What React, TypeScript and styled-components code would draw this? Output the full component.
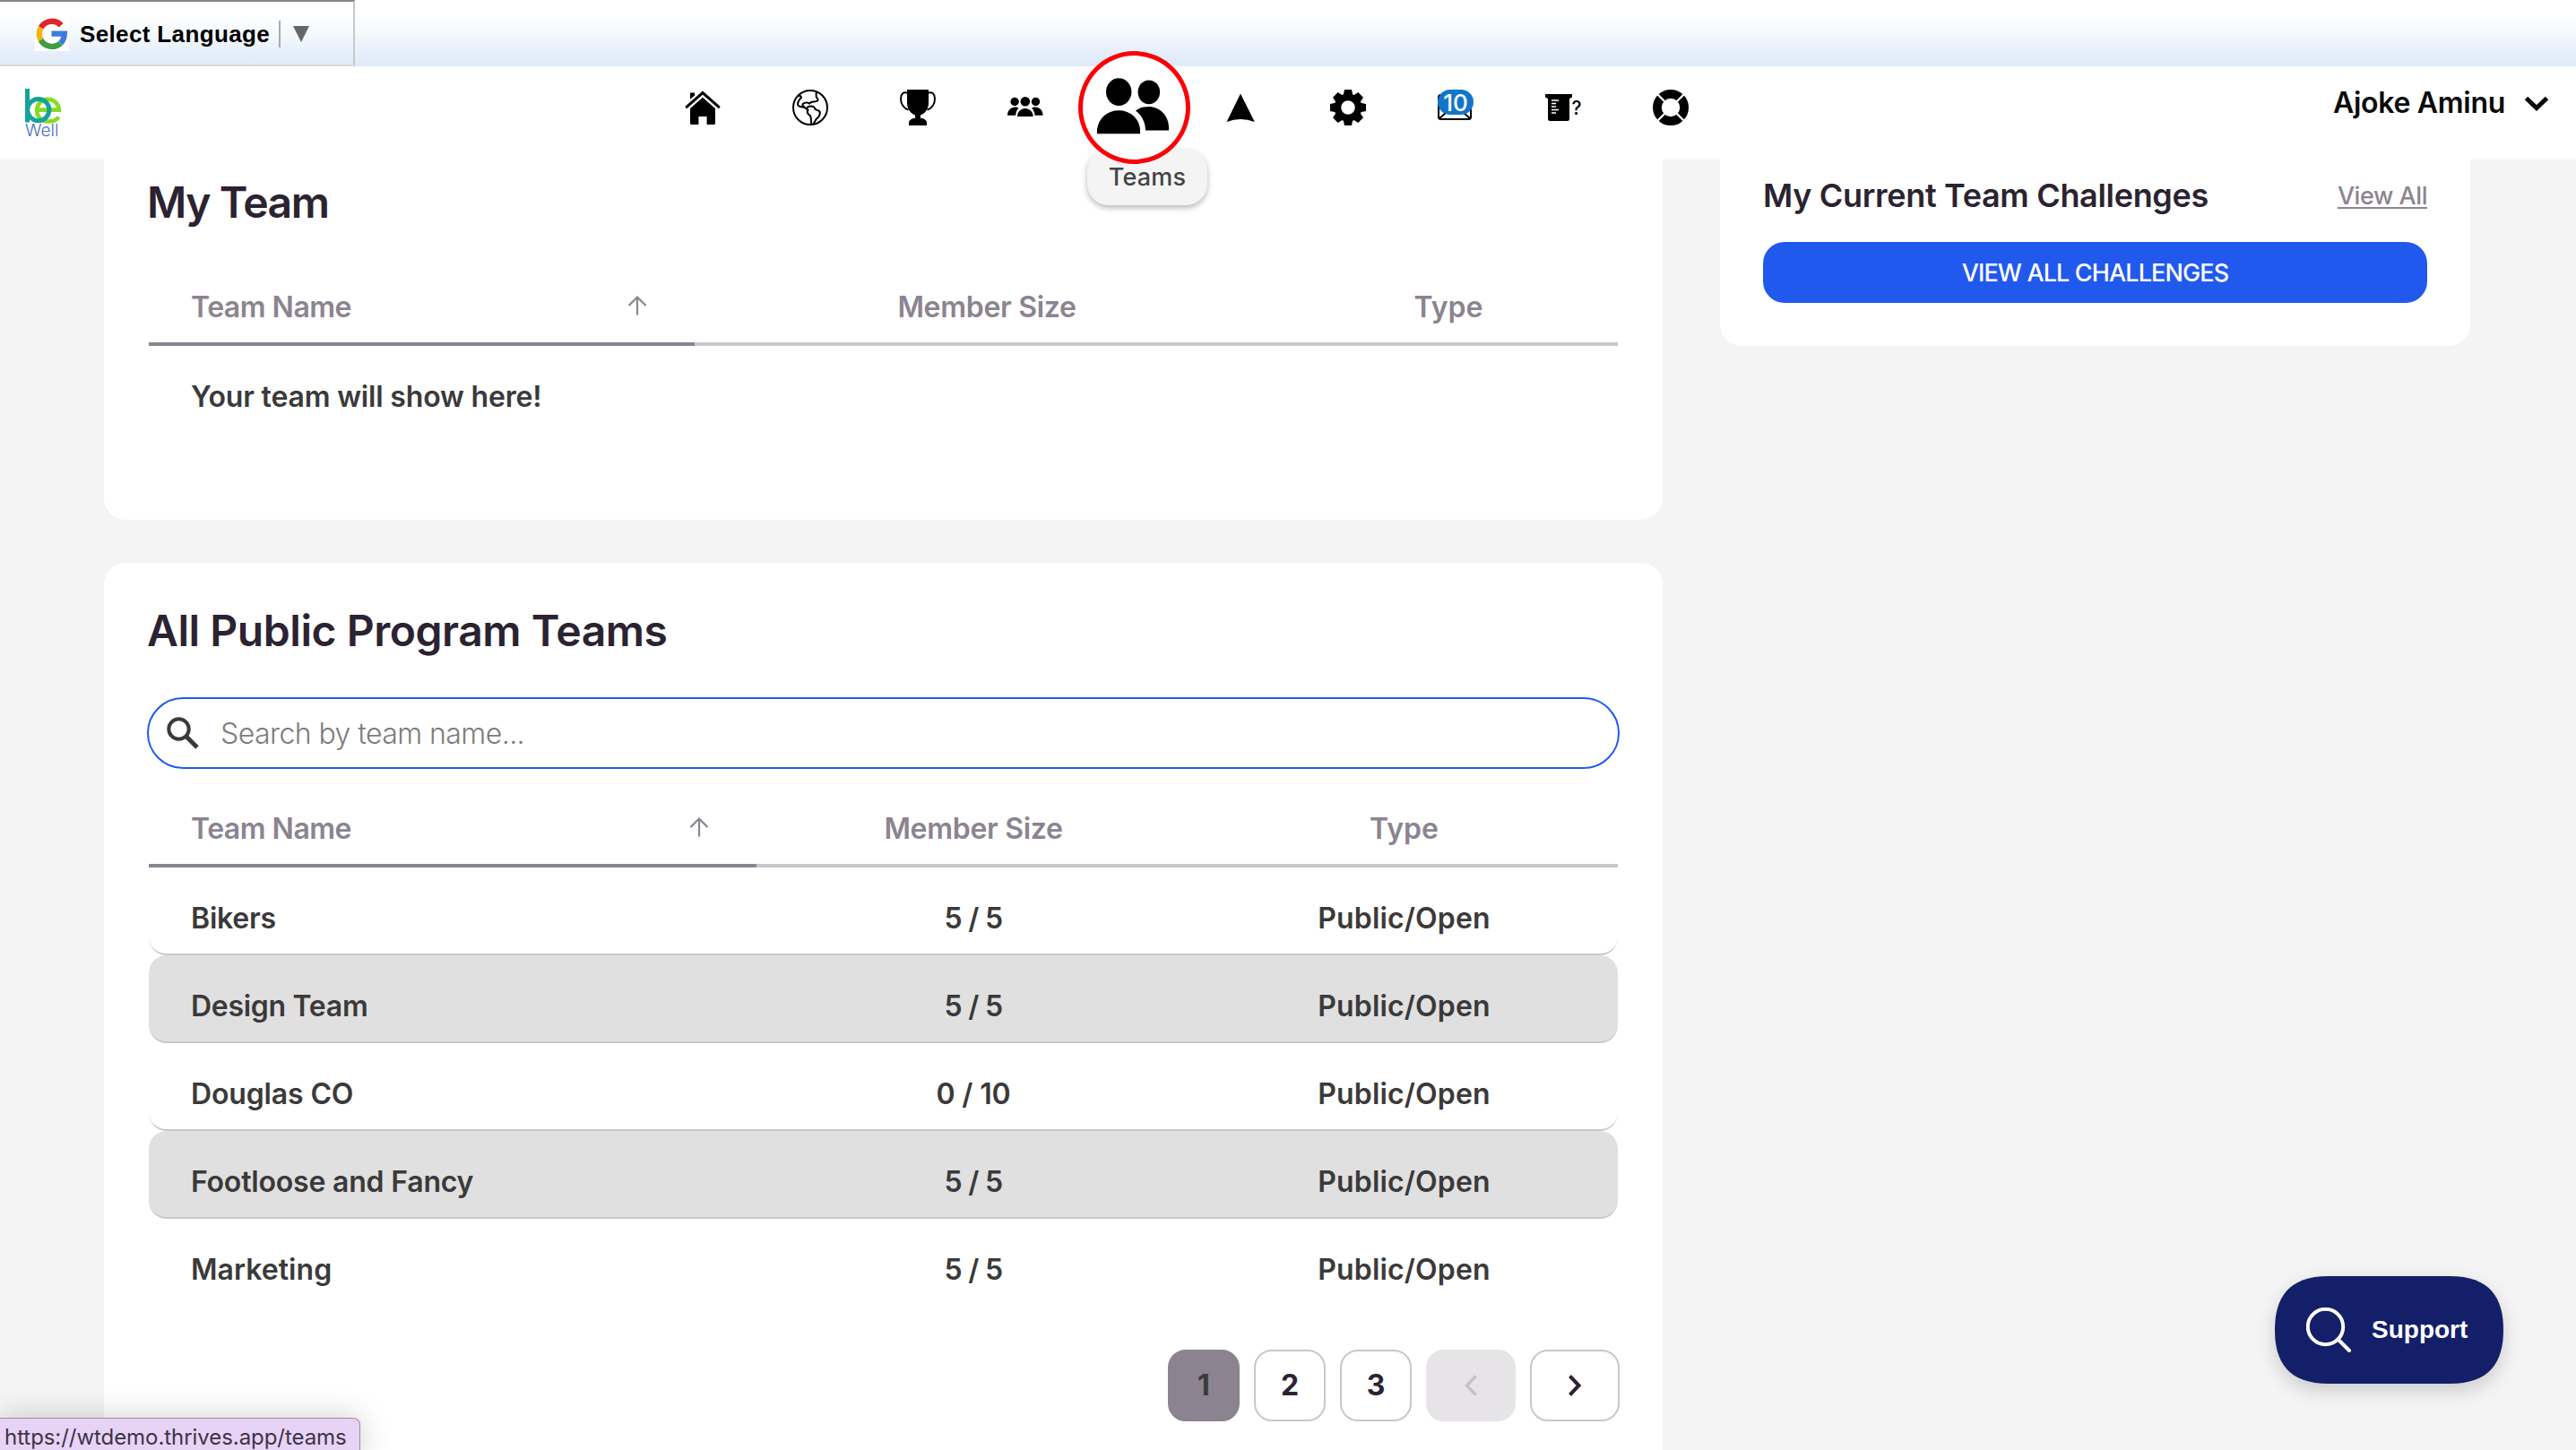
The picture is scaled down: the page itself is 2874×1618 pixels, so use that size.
import React from "react";
import styled, { createGlobalStyle } from "styled-components";

const ink = "#2b2331";
const muted = "#8b8490";
const line = "#c9c7cd";
const blue = "#2159ee";
const body = "#3a3a3a";

const GlobalStyle = createGlobalStyle`
  * { box-sizing: border-box; }
  html, body { margin: 0; padding: 0; background: #f4f4f4; overflow: hidden; }
  body { font-family: Inter, "Liberation Sans", sans-serif; }
`;

const Page = styled.div`
  display: flex;
  flex-direction: column;
  width: 2874px;
  height: 1618px;
  overflow: hidden;
  background: #f4f4f4;
`;

const TranslateBar = styled.div`
  display: flex;
  flex: none;
  height: 74px;
  background: linear-gradient(#fff 0%, #fff 22%, #f3f8fc 55%, #e6effb 78%, #deeaf8 100%);
`;

const TranslateGadget = styled.div`
  display: flex;
  align-items: center;
  width: 396px;
  padding: 2px 0 0 39px;
  border: solid;
  border-width: 2px 2px 2px 0;
  border-color: #888 #c8c8c8 #dadada;
  font: bold 26px/30px "Liberation Sans", Arial, sans-serif;
  color: #000;
`;

const TranslateLabel = styled.span`
  width: 211px;
  margin: 0 11px 0 12px;
  padding-bottom: 1px;
  letter-spacing: 0.36px;
  white-space: nowrap;
`;

const Divider = styled.span`
  width: 2px;
  height: 30px;
  margin-right: 14px;
  background: #aaa;
`;

const Header = styled.header`
  display: flex;
  flex: none;
  position: relative;
  z-index: 2;
  height: 104px;
  padding: 0 28px;
  background: #fff;
`;

const LogoBox = styled.div`
  display: flex;
  width: 696px;
  padding-top: 24px;
`;

const Nav = styled.nav`
  display: flex;
  height: 92px;
`;

const NavItem = styled.div`
  display: flex;
  position: relative;
  align-items: center;
  justify-content: center;
  width: 120px;
`;

const Ring = styled.span`
  position: absolute;
  z-index: 2;
  left: -1px;
  top: -17px;
  display: flex;
  align-items: center;
  justify-content: center;
  width: 125px;
  height: 126px;
  padding: 0 4px 3px 0;
  border: 5px solid #fb0007;
  border-radius: 50%;
  background: #fff;
`;

const Tooltip = styled.span`
  position: absolute;
  z-index: 1;
  left: 9px;
  top: 92px;
  display: flex;
  align-items: center;
  justify-content: center;
  width: 134px;
  height: 63px;
  border-radius: 24px;
  background: #f4f4f4;
  box-shadow: 0 3px 6px rgba(0, 0, 0, 0.28);
  font-size: 27px;
  font-weight: 500;
  letter-spacing: 0.2px;
  color: #444;
`;

const MailIcon = styled.span`
  display: flex;
  position: relative;
`;

const MailCount = styled.span`
  position: absolute;
  left: 0;
  top: 0;
  width: 40px;
  height: 28px;
  border-radius: 14px;
  background: #1375ca;
  color: #fff;
  font-size: 26px;
  font-weight: 500;
  line-height: 29px;
  text-align: center;
`;

const User = styled.div`
  display: flex;
  align-items: center;
  justify-content: flex-end;
  flex: 1;
  height: 81px;
  gap: 20px;
  color: #0a0a0a;
`;

const Text = styled.span<{ $size: number; $weight: number; $track?: number }>`
  font-size: ${(p) => p.$size}px;
  font-weight: ${(p) => p.$weight};
  letter-spacing: ${(p) => p.$track ?? 0}px;
  white-space: nowrap;
`;

const Main = styled.main`
  display: grid;
  grid-template-columns: 1739px 837px;
  column-gap: 64px;
  align-items: start;
  padding-left: 116px;
`;

const Column = styled.div`
  display: flex;
  flex-direction: column;
  gap: 48px;
`;

const Card = styled.section<{ $top: number; $height: number; $scrolled?: boolean }>`
  display: flex;
  flex-direction: column;
  height: ${(p) => p.$height}px;
  padding: ${(p) => p.$top}px 48px 0;
  border-radius: ${(p) => (p.$scrolled ? "0 0 24px 24px" : "24px")};
  background: #fff;
`;

const Title = styled.h2<{ $track: number }>`
  flex: none;
  margin: 0;
  font-size: 48px;
  font-weight: 600;
  line-height: 60px;
  letter-spacing: ${(p) => p.$track}px;
  color: ${ink};
  white-space: nowrap;
`;

const Table = styled.div<{ $gap: number }>`
  display: flex;
  flex-direction: column;
  width: 1639px;
  margin: ${(p) => p.$gap}px 0 0 2px;
`;

const HeadRow = styled.div<{ $cols: string }>`
  display: grid;
  grid-template-columns: ${(p) => p.$cols};
  height: 83px;
`;

const HeadCell = styled.div<{ $sorted?: boolean }>`
  display: flex;
  align-items: center;
  justify-content: ${(p) => (p.$sorted ? "space-between" : "center")};
  padding: ${(p) => (p.$sorted ? "0 53px 0 47px" : "0")};
  border-bottom: 4px solid ${(p) => (p.$sorted ? muted : line)};
  color: ${muted};
`;

const SortIcon = styled.svg`
  margin-bottom: 4px;
`;

const Row = styled.div<{ $cols: string; $shaded?: boolean; $ruled?: boolean }>`
  display: grid;
  grid-template-columns: ${(p) => p.$cols};
  align-items: center;
  height: 98px;
  padding-top: 16px;
  border-bottom: 2px solid ${(p) => (p.$ruled ? line : "transparent")};
  border-radius: 20px;
  background: ${(p) => (p.$shaded ? "#e0e0e0" : "transparent")};
  color: ${body};
`;

const Cell = styled.div<{ $start?: boolean }>`
  display: flex;
  justify-content: ${(p) => (p.$start ? "flex-start" : "center")};
  padding-left: ${(p) => (p.$start ? 47 : 0)}px;
`;

const SearchField = styled.div`
  display: flex;
  flex: none;
  align-items: center;
  gap: 23px;
  width: 1643px;
  height: 80px;
  margin: 44px 0 0 0;
  padding-left: 19px;
  border: 2px solid ${blue};
  border-radius: 40px;
  color: #7c7c7c;
`;

const Pager = styled.div`
  display: flex;
  justify-content: flex-end;
  gap: 16px;
  width: 1643px;
  margin-top: 48px;
`;

const PageButton = styled.button<{ $wide?: boolean; $state?: "current" | "disabled" }>`
  display: flex;
  align-items: center;
  justify-content: center;
  width: ${(p) => (p.$wide ? 100 : 80)}px;
  height: 80px;
  padding: 0;
  border: 2px solid ${(p) => (p.$state === "current" ? muted : p.$state === "disabled" ? "#e6e4e7" : line)};
  border-radius: 20px;
  background: ${(p) => (p.$state === "current" ? muted : p.$state === "disabled" ? "#e6e4e7" : "#fff")};
  color: ${(p) => (p.$state === "current" ? body : p.$state === "disabled" ? "#c5c3c8" : ink)};
  font: 700 32px/40px Inter, sans-serif;
`;

const CardHead = styled.div`
  display: flex;
  align-items: center;
  justify-content: space-between;
  height: 44px;
  color: ${ink};
`;

const ViewAll = styled.a`
  font-size: 27px;
  font-weight: 500;
  letter-spacing: -0.45px;
  color: ${muted};
  text-decoration: underline;
  text-decoration-thickness: 2px;
  text-underline-offset: 3px;
`;

const PrimaryButton = styled.button`
  display: flex;
  align-items: center;
  justify-content: center;
  height: 68px;
  margin-top: 30px;
  border: 0;
  border-radius: 24px;
  background: ${blue};
  color: #fff;
  font-family: inherit;
`;

const Support = styled.button`
  position: absolute;
  left: 2538px;
  top: 1424px;
  display: flex;
  align-items: center;
  gap: 23px;
  width: 255px;
  height: 120px;
  padding: 0 0 0 35px;
  border: 0;
  background: none;
  color: #fff;
  font: bold 28px/32px "Liberation Sans", Arial, sans-serif;
`;

const SupportShape = styled.svg`
  position: absolute;
  left: 0;
  top: 0;
  overflow: visible;
  filter: drop-shadow(0 8px 10px rgba(0, 0, 0, 0.16));
`;

const SupportIcon = styled.svg`
  position: relative;
`;

const SupportLabel = styled.span`
  position: relative;
`;

const StatusBar = styled.div`
  position: absolute;
  left: 0;
  top: 1582px;
  display: flex;
  align-items: center;
  width: 402px;
  height: 44px;
  padding: 0 0 2px 5px;
  border: solid #9a8fa3;
  border-width: 1px 1px 0 0;
  border-radius: 0 8px 0 0;
  background: #e7d3f6;
  box-shadow: 0 0 34px rgba(0, 0, 0, 0.2);
  color: #3d3347;
`;

const Icon = ({ children }: { children: React.ReactNode }) => (
  <svg width="40" height="40" viewBox="0 0 40 40">{children}</svg>
);

const GoogleIcon = () => (
  <svg width="38" height="38" viewBox="0 0 38 38">
    <rect width="38" height="38" fill="#fff" />
    <g fill="none" strokeWidth="6.4">
      <path d="M29.2 9.2A14.2 14.2 0 0 0 6.6 11.8" stroke="#e0252c" />
      <path d="M6.6 11.8A14.2 14.2 0 0 0 6.6 25.6" stroke="#f7b50c" />
      <path d="M6.6 25.6A14.2 14.2 0 0 0 28.4 29.3" stroke="#3f9f43" />
      <path d="M28.4 29.3C31.4 26.8 32.6 22.5 32.8 18.6H18.5" stroke="#3d7be0" />
    </g>
  </svg>
);

const Logo = () => (
  <svg width="44" height="60" viewBox="0 0 44 60">
    <g fill="none" strokeWidth="5">
      <path d="M37.5 32.5C34.5 37 30 37.4 27.4 37.4A12.4 12.4 0 1 1 37.9 24.6H14.5" stroke="#85dc23" strokeWidth="4.6" />
      <circle cx="14.8" cy="24.6" r="12.1" stroke="#16a29b" />
    </g>
    <rect x="0" y="1" width="5" height="37.5" fill="#16a29b" />
    <text x="0" y="54.4" fontSize="19" fontWeight="300" fontFamily="Inter" fill="#4b70bb" textLength="37.5" lengthAdjust="spacingAndGlyphs">Well</text>
  </svg>
);

const HomeIcon = () => (
  <Icon>
    <path d="M1.2 20.2L20 3.6L38.8 20.2" fill="none" stroke="#000" strokeWidth="3" />
    <path d="M6 3.6H11V6.6L6 10.8Z" />
    <path d="M20 8.8L34 21V38L33 39H24.6V30H15.4V39H7L6 38V21Z" />
  </Icon>
);

const GlobeIcon = () => (
  <Icon>
    <g fill="none" stroke="#000" strokeWidth="2" strokeLinejoin="round">
      <circle cx="20" cy="20" r="19" />
      <path d="M6.5 6.5Q9.5 6.5 10 8.8Q9 10 8 11Q6 14 6 16.5Q6.5 18.5 9 19L13 19.7L15.3 21.2M13.5 19.6Q11 17.8 11.5 16.2Q13 14.3 16.5 14.4Q18.5 14.6 19 15.6Q20.6 13.6 23.5 13.6Q28 13.6 28.6 11.8Q28.6 10.3 26.7 7.8Q26.2 6 27 2" />
      <path d="M15.3 21.2L17.4 19.3Q20 18 23.6 19Q25.2 20 25.4 21.8L30.4 24.2Q31.6 26.8 29.4 30.2L26.6 33Q25.2 35.6 23.4 38.2M15.3 21.2L17.6 22.6Q15.6 25.4 17.6 27L20.2 29.4Q21.4 33 21 39" />
    </g>
  </Icon>
);

const TrophyIcon = () => (
  <Icon>
    <path d="M8 0H32V15C32 22 27.5 27 23 28.4V32C27 32 30 34 30 37V40H10V37C10 34 13 32 17 32V28.4C12.5 27 8 22 8 15Z" />
    <path d="M8.5 3.6C4 2 1 5 1 10.2C1 16 4.5 20.8 9.5 22.6M31.5 3.6C36 2 39 5 39 10.2C39 16 35.5 20.8 30.5 22.6" fill="none" stroke="#000" strokeWidth="2" />
  </Icon>
);

const GroupIcon = () => (
  <Icon>
    <circle cx="8.1" cy="13.5" r="4.7" />
    <circle cx="31.5" cy="13.5" r="4.7" />
    <circle cx="19.8" cy="13.3" r="5.3" />
    <path d="M11 30C11 24.5 15 21 19.8 21S28.600 24.5 28.600 30Z" />
    <path d="M0 28.7C0 23 4 19.4 8.5 19.4C10.2 19.4 11.5 19.8 12.7 20.5C10.5 22.5 9.5 25 9.1 28.7Z" />
    <path d="M39.6 28.7C39.6 23 35.6 19.4 31.1 19.4C29.4 19.4 28.1 19.8 26.9 20.5C29.1 22.5 30.1 25 30.5 28.7Z" />
  </Icon>
);

const TeamsIcon = () => (
  <svg width="80" height="63" viewBox="0 0 80 63">
    <ellipse cx="24.2" cy="15.6" rx="14.2" ry="15.3" />
    <ellipse cx="57.8" cy="15.8" rx="12.3" ry="13.4" />
    <path d="M0 62.3V57C2 44 12 36.2 24 36.2S46.5 44 48 57V62.3Z" />
    <path d="M43 36.5C47 33.2 52.5 32 57.5 32C70 32 79.5 42 80 54V58.5H54C54 50 50 41.5 43 36.5Z" />
  </svg>
);

const ArrowIcon = () => (
  <Icon>
    <path d="M20 4.5L35.8 36Q20 30 4.6 36Z" />
  </Icon>
);

const GearIcon = () => (
  <Icon>
    <circle cx="20" cy="20" r="11.6" fill="none" stroke="#000" strokeWidth="7.6" />
    {[0, 45, 90, 135, 180, 225, 270, 315].map((a) => (
      <path key={a} d="M16 0H24L25.3 6H14.7Z" transform={`rotate(${a} 20 20)`} />
    ))}
  </Icon>
);

const BeakerIcon = () => (
  <Icon>
    <path d="M0 5H30V8.5L27 10V32.5Q27 35 24.5 35H5.5Q3 35 3 32.5V10L0 8.5Z" />
    <path d="M7 12H15M7 15.5H12M7 19H12M7 22.5H15M7 26H12" stroke="#fff" strokeWidth="1.3" />
    <text x="29.5" y="28" fontSize="22" fontWeight="500" fontFamily="Inter" textLength="11" lengthAdjust="spacingAndGlyphs">?</text>
  </Icon>
);

const LifebuoyIcon = () => (
  <Icon>
    <circle cx="20" cy="20" r="15.1" fill="none" stroke="#000" strokeWidth="9.8" />
    <path d="M4 4L36 36M36 4L4 36" stroke="#fff" strokeWidth="2.4" />
    <circle cx="20" cy="20" r="9.5" fill="#fff" />
  </Icon>
);

const SortArrow = () => (
  <SortIcon width="22" height="24" viewBox="0 0 22 24" fill="none" stroke={muted} strokeWidth="2.2">
    <path d="M11 22.5V3M1.5 12L11 2.5L20.5 12" />
  </SortIcon>
);

const Label = ({ children, track = 0 }: { children: React.ReactNode; track?: number }) => (
  <Text $size={32} $weight={600} $track={track}>{children}</Text>
);

const TableHead = ({ cols }: { cols: string }) => (
  <HeadRow $cols={cols}>
    <HeadCell $sorted><Label track={-0.5}>Team Name</Label><SortArrow /></HeadCell>
    <HeadCell><Label track={-0.3}>Member Size</Label></HeadCell>
    <HeadCell><Label>Type</Label></HeadCell>
  </HeadRow>
);

const teams = [
  { name: "Bikers", size: "5 / 5", track: -0.2, sizeTrack: -0.7 },
  { name: "Design Team", size: "5 / 5", track: -0.3, sizeTrack: -0.7 },
  { name: "Douglas CO", size: "0 / 10", track: -0.15, sizeTrack: -0.2 },
  { name: "Footloose and Fancy", size: "5 / 5", track: -0.2, sizeTrack: -0.7 },
  { name: "Marketing", size: "5 / 5", track: 0.05, sizeTrack: -0.7 },
];

const myCols = "609px 652px 378px";
const allCols = "678px 484px 477px";

export default function App() {
  return (
    <Page>
      <GlobalStyle />
      <TranslateBar>
        <TranslateGadget>
          <GoogleIcon />
          <TranslateLabel>Select Language</TranslateLabel>
          <Divider />
          <svg width="18" height="18" viewBox="0 0 18 18"><path d="M0 0H18L9 18Z" fill="#666" /></svg>
        </TranslateGadget>
      </TranslateBar>

      <Header>
        <LogoBox><Logo /></LogoBox>
        <Nav>
          <NavItem><HomeIcon /></NavItem>
          <NavItem><GlobeIcon /></NavItem>
          <NavItem><TrophyIcon /></NavItem>
          <NavItem><GroupIcon /></NavItem>
          <NavItem>
            <Ring><TeamsIcon /></Ring>
            <Tooltip>Teams</Tooltip>
          </NavItem>
          <NavItem><ArrowIcon /></NavItem>
          <NavItem><GearIcon /></NavItem>
          <NavItem>
            <MailIcon>
              <Icon>
                <rect x="1" y="6" width="36" height="27" rx="2.5" fill="none" stroke="#000" strokeWidth="2" />
                <path d="M2 32L9 26M36 32L29 26" stroke="#000" strokeWidth="2" />
              </Icon>
              <MailCount>10</MailCount>
            </MailIcon>
          </NavItem>
          <NavItem><BeakerIcon /></NavItem>
          <NavItem><LifebuoyIcon /></NavItem>
        </Nav>
        <User>
          <Text $size={32} $weight={600} $track={-0.3}>Ajoke Aminu</Text>
          <svg width="31" height="20" viewBox="0 0 31 20"><path d="M3.5 4.5L15 15.5L26.5 4.5" fill="none" stroke="#0a0a0a" strokeWidth="5" /></svg>
        </User>
      </Header>

      <Main>
        <Column>
          <Card $top={18} $height={402} $scrolled>
            <Title $track={-1.45}>My Team</Title>
            <Table $gap={47}>
              <TableHead cols={myCols} />
              <Row $cols={myCols}>
                <Cell $start><Label track={-0.18}>Your team will show here!</Label></Cell>
              </Row>
            </Table>
          </Card>

          <Card $top={46} $height={1040}>
            <Title $track={-0.45}>All Public Program Teams</Title>
            <SearchField>
              <svg width="38" height="38" viewBox="0 0 38 38" fill="none" stroke={body}>
                <circle cx="14.5" cy="14.5" r="11.2" strokeWidth="4" />
                <path d="M22.5 22.5L35 35" strokeWidth="5" />
              </svg>
              <Text $size={32} $weight={300} $track={-0.56}>Search by team name...</Text>
            </SearchField>
            <Table $gap={27}>
              <TableHead cols={allCols} />
              {teams.map((t, i) => (
                <Row key={t.name} $cols={allCols} $shaded={i % 2 === 1} $ruled={i < teams.length - 1}>
                  <Cell $start><Label track={t.track}>{t.name}</Label></Cell>
                  <Cell><Label track={t.sizeTrack}>{t.size}</Label></Cell>
                  <Cell><Label track={0.15}>Public/Open</Label></Cell>
                </Row>
              ))}
            </Table>
            <Pager>
              <PageButton $state="current">1</PageButton>
              <PageButton>2</PageButton>
              <PageButton>3</PageButton>
              <PageButton $wide $state="disabled">
                <svg width="16" height="26" viewBox="0 0 16 26"><path d="M13.5 2.5L3.5 13L13.5 23.5" fill="none" stroke="currentColor" strokeWidth="3.6" /></svg>
              </PageButton>
              <PageButton $wide>
                <svg width="16" height="26" viewBox="0 0 16 26"><path d="M2.5 2.5L12.5 13L2.5 23.5" fill="none" stroke="currentColor" strokeWidth="4" /></svg>
              </PageButton>
            </Pager>
          </Card>
        </Column>

        <Card $top={18} $height={208} $scrolled>
          <CardHead>
            <Text $size={36} $weight={600} $track={-0.32}>My Current Team Challenges</Text>
            <ViewAll>View All</ViewAll>
          </CardHead>
          <PrimaryButton><Text $size={27} $weight={500} $track={-0.87}>VIEW ALL CHALLENGES</Text></PrimaryButton>
        </Card>
      </Main>

      <Support>
        <SupportShape width="255" height="120" viewBox="0 0 255 120">
          <path d="M60 0H195C240 0 255 24 255 60S240 120 195 120H60C15 120 0 96 0 60S15 0 60 0Z" fill="#141f69" />
        </SupportShape>
        <SupportIcon width="50" height="50" viewBox="0 0 50 50" fill="none" stroke="#fff" strokeWidth="4">
          <circle cx="21.5" cy="21.5" r="19.7" />
          <path d="M35.5 35.5L48 48" strokeLinecap="round" />
        </SupportIcon>
        <SupportLabel>Support</SupportLabel>
      </Support>

      <StatusBar><Text $size={24} $weight={400} $track={-0.06}>https://wtdemo.thrives.app/teams</Text></StatusBar>
    </Page>
  );
}
